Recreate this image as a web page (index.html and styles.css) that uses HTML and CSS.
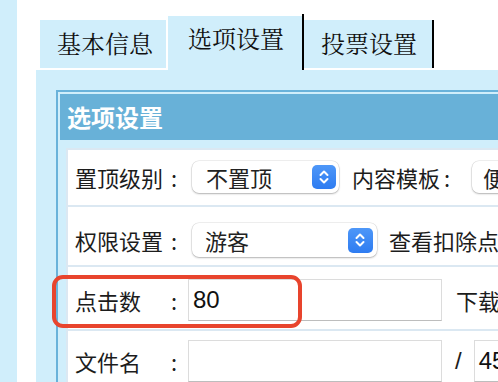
FILE: index.html
```html
<!DOCTYPE html>
<html lang="zh-CN">
<head>
<meta charset="utf-8">
<title>选项设置</title>
<link rel="stylesheet" href="styles.css">
</head>
<body>
<div class="page">
  <div class="strip"></div>
  <div class="main">
    <div class="tabs">
      <div class="tab first">基本信息</div>
      <div class="tab active">选项设置</div>
      <div class="divider"></div>
      <div class="tab last">投票设置</div>
    </div>
    <div class="panel">
      <div class="box">
        <div class="box-head">选项设置</div>
        <div class="table">
          <div class="row r1">
            <span class="label"><span>置顶级别</span><span class="colon">:</span></span>
            <div class="select s1">
              <span class="sel-text">不置顶</span>
              <span class="sel-btn"><svg viewBox="0 0 24 24" width="24" height="24"><path d="M8.5 10 L12 6.5 L15.5 10 M8.5 14 L12 17.5 L15.5 14" fill="none" stroke="#fff" stroke-width="2" stroke-linecap="round" stroke-linejoin="round"/></svg></span>
            </div>
            <span class="label l-mid"><span>内容模板</span><span class="colon c-mid">:</span></span>
            <div class="select s3"><span class="sel-text">便</span></div>
          </div>
          <div class="row r2">
            <span class="label"><span>权限设置</span><span class="colon">:</span></span>
            <div class="select s2">
              <span class="sel-text">游客</span>
              <span class="sel-btn"><svg viewBox="0 0 24 24" width="24" height="24"><path d="M8.5 10 L12 6.5 L15.5 10 M8.5 14 L12 17.5 L15.5 14" fill="none" stroke="#fff" stroke-width="2" stroke-linecap="round" stroke-linejoin="round"/></svg></span>
            </div>
            <span class="label l-after">查看扣除点</span>
          </div>
          <div class="row r3">
            <span class="label"><span>点击数</span><span class="colon">:</span></span>
            <div class="input wide"><span class="val">80</span></div>
            <span class="label l-after2">下载</span>
          </div>
          <div class="row r4">
            <span class="label"><span>文件名</span><span class="colon">:</span></span>
            <div class="input wide"></div>
            <span class="slash">/</span>
            <div class="input small"><span class="val">45</span></div>
          </div>
        </div>
      </div>
    </div>
  </div>
  <div class="annot"></div>
</div>
</body>
</html>
```

FILE: styles.css
```css
html, body {
  margin: 0;
  padding: 0;
  background: #ffffff;
}
body {
  width: 498px;
  height: 382px;
  overflow: hidden;
  font-family: "Noto Sans CJK SC", "Liberation Sans", sans-serif;
}
.page {
  position: relative;
  display: flex;
  width: 498px;
  height: 382px;
  overflow: hidden;
}
.strip {
  width: 17px;
  flex-shrink: 0;
  background: #d0eefb;
}
.main {
  margin-left: 19px;
  flex: 1;
  display: flex;
  flex-direction: column;
  min-width: 0;
}
.tabs {
  height: 70px;
  display: flex;
  align-items: flex-end;
  padding-left: 4px;
  flex-shrink: 0;
}
.tab {
  flex-shrink: 0;
  background: #d0eefb;
  color: #111;
  font-family: "Noto Serif CJK SC", "Liberation Serif", serif;
  font-size: 24px;
  height: 48px;
  line-height: 45px;
  margin-bottom: 2px;
  box-sizing: border-box;
  white-space: nowrap;
}
.tab.first {
  width: 126px;
  padding-left: 17px;
  margin-right: 2px;
}
.tab.active {
  width: 134px;
  height: 54px;
  line-height: 44px;
  padding-left: 20px;
  margin-bottom: 0;
}
.divider {
  width: 2px;
  height: 56px;
  background: #000;
  flex-shrink: 0;
}
.tab.last {
  width: 130px;
  padding-left: 17px;
  border-right: 2px solid #000;
}
.panel {
  flex: 1;
  background: #d0eefb;
  padding: 20px 0 0 20px;
  min-width: 0;
}
.box {
  border: 2px solid #69b2da;
  border-right: none;
  padding: 2px 0 0 2px;
  background: #d0eefb;
  height: 100%;
  box-sizing: border-box;
  overflow: hidden;
}
.box-head {
  height: 46px;
  line-height: 46px;
  background: #68b1d8;
  color: #fff;
  font-weight: bold;
  font-size: 24px;
  padding-left: 7px;
}
.table {
  margin: 8px 0 0 6px;
  border: 2px solid #dbe8f2;
  border-right: none;
  border-bottom: none;
  background: #fff;
  overflow: hidden;
  height: 300px;
}
.row {
  display: flex;
  align-items: center;
  padding-left: 7px;
  border-bottom: 2px solid #dbe8f2;
  box-sizing: border-box;
  white-space: nowrap;
  font-size: 22px;
  color: #1c1c1c;
}
.row > * {
  flex-shrink: 0;
}
.r1 { height: 57px; padding-bottom: 1px; }
.r2 { height: 60px; padding-top: 8px; }
.r3 { height: 64px; padding-top: 4px; }
.r4 { height: 80px; align-items: flex-start; padding-top: 9px; }
.label {
  display: inline-flex;
  line-height: 32px;
}
.row > .label:first-child {
  width: 110px;
  justify-content: space-between;
}
.r4 > .label:first-child { line-height: 42px; }
.colon {
  display: inline-block;
  width: 22px;
  text-align: center;
}
.l-mid {
  margin-left: 13px;
}
.c-mid {
  width: 14px;
}
.select {
  position: relative;
  height: 32px;
  background: #fff;
  border-radius: 7px;
  box-shadow: 0 0 0 0.5px rgba(0,0,0,0.12), 0 1px 2px rgba(0,0,0,0.25);
  display: flex;
  align-items: center;
  box-sizing: border-box;
  padding-left: 14px;
  margin-left: 7px;
}
.s1 { width: 147px; }
.s2 { width: 185px; height: 34px; padding-left: 13px; }
.s3 { width: 120px; margin-left: 18px; padding-left: 11px; }
.sel-text {
  flex: 1;
  color: #222;
}
.sel-btn {
  width: 24px;
  height: 24px;
  margin-right: 3px;
  border-radius: 5px;
  background: linear-gradient(#4e97f8, #2e7cf1);
  display: flex;
}
.s2 .sel-btn { margin-right: 4px; width: 25px; height: 25px; }
.l-after { margin-left: 12px; }
.input {
  height: 42px;
  box-sizing: border-box;
  border: 1px solid #dcdcdc;
  border-bottom-color: #bdbdbd;
  background: #fff;
  font-family: "Liberation Sans", sans-serif;
  font-size: 24px;
  color: #111;
  line-height: 40px;
  padding-left: 4px;
}
.input.wide {
  width: 254px;
  margin-left: 3px;
}
.input.small {
  width: 60px;
}
.l-after2 { margin-left: 14px; }
.slash {
  font-family: "Liberation Sans", sans-serif;
  font-size: 24px;
  line-height: 42px;
  margin: 0 12px 0 13px;
}
.annot {
  position: absolute;
  left: 52px;
  top: 275px;
  width: 250px;
  height: 53px;
  box-sizing: border-box;
  border: 4px solid #e8442d;
  border-radius: 11px;
}
```
